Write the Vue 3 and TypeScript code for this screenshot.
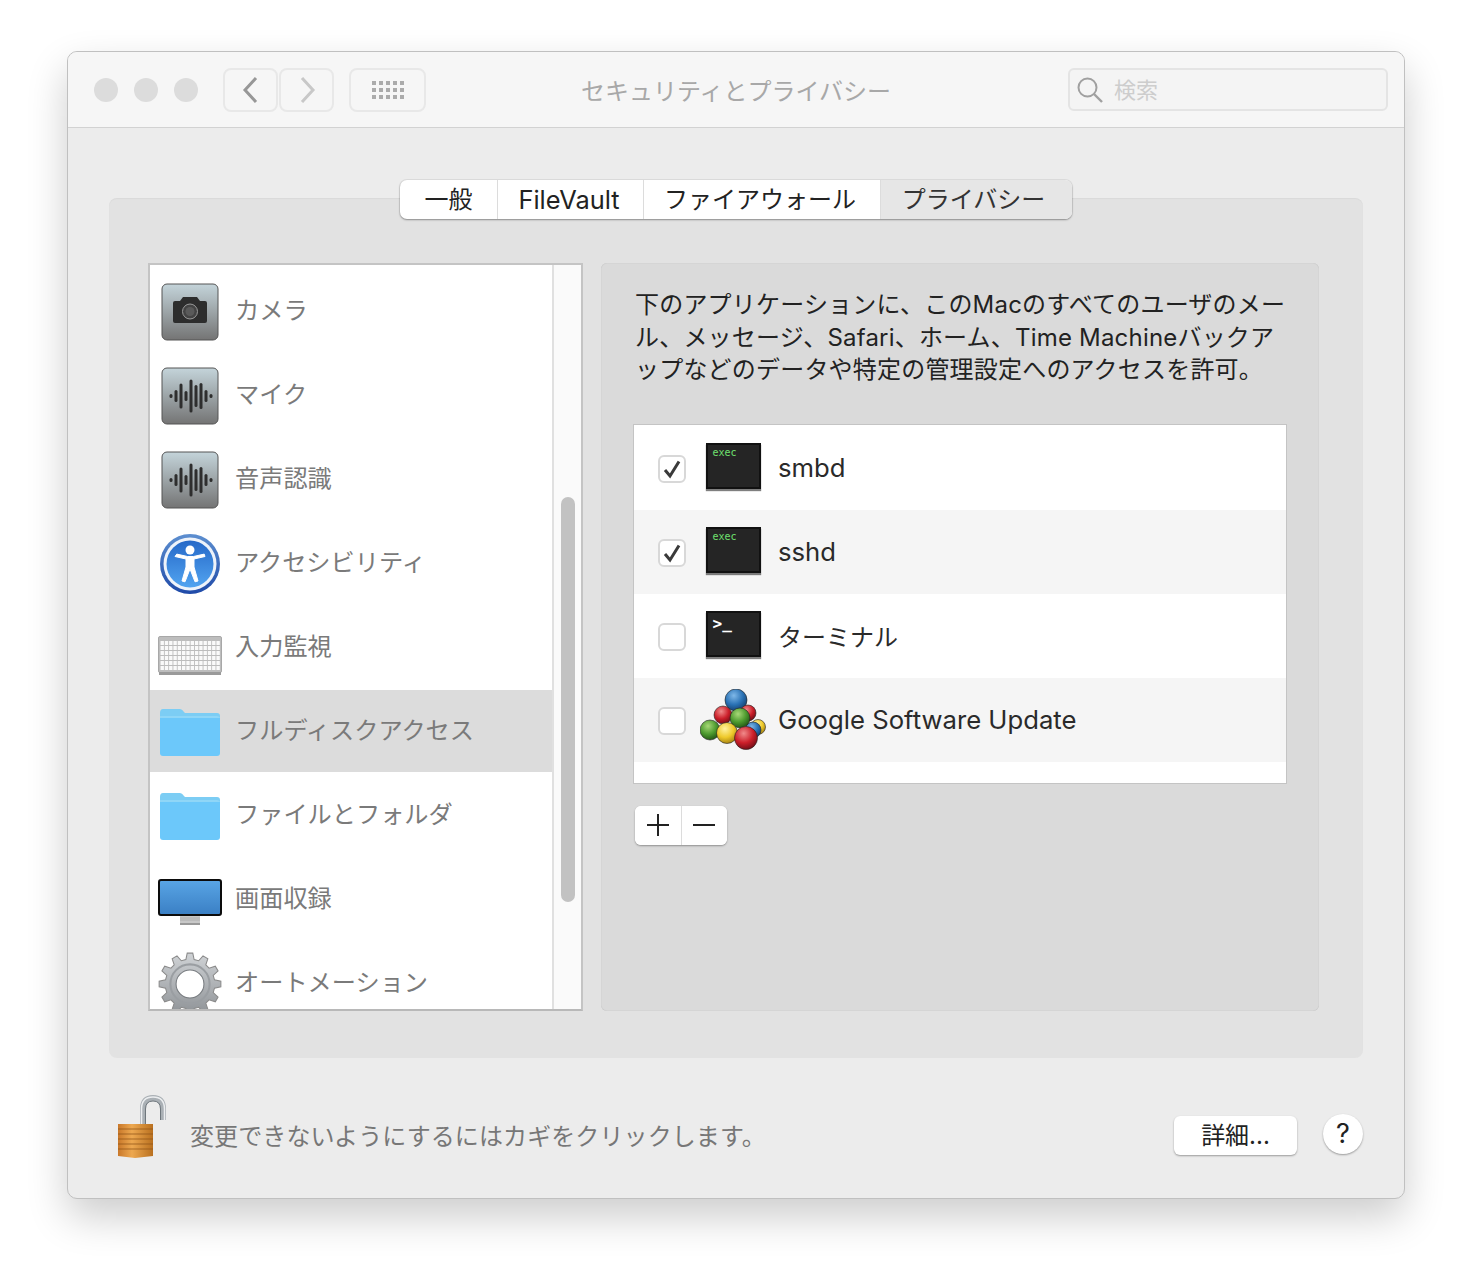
<template>
  <div class="page">
    <div class="window">
      <header class="titlebar">
        <div class="lights">
          <span></span>
          <span></span>
          <span></span>
        </div>
        <div class="nav">
          <button class="tool">
            <svg width="20" height="28" viewBox="0 0 20 28"><path d="M15 2 4 14l11 12" fill="none" stroke="#979797" stroke-width="3" /></svg>
          </button>
          <button class="tool">
            <svg width="20" height="28" viewBox="0 0 20 28"><path d="m5 2 11 12L5 26" fill="none" stroke="#c8c8c8" stroke-width="3" /></svg>
          </button>
        </div>
        <button class="tool grid-btn">
          <span v-for="n in 15" :key="n"></span>
        </button>
        <div class="title">セキュリティとプライバシー</div>
        <div class="search">
          <svg width="28" height="28" viewBox="0 0 28 28">
            <circle cx="11.5" cy="11.5" r="9" fill="none" stroke="#a0a0a0" stroke-width="2" />
            <path d="m18 18 8 8" stroke="#a0a0a0" stroke-width="2.4" />
          </svg>
          <span>検索</span>
        </div>
      </header>

      <main class="content">
        <nav class="tabs">
          <div v-for="t in tabs" :key="t" class="tab" :class="{ active: t === 'プライバシー' }">{{ t }}</div>
        </nav>
        <section class="panel">
          <div class="list">
            <div class="rows">
              <div v-for="s in services" :key="s.label" class="row" :class="{ selected: s.selected }">
                <div class="row-icon">
                  <svg v-if="s.icon === 'camera'" width="58" height="58" viewBox="0 0 58 58">
                    <defs>
                      <linearGradient id="tile1" x1="0" y1="0" x2="0" y2="1">
                        <stop offset="0" stop-color="#c4d4da" />
                        <stop offset="1" stop-color="#747474" />
                      </linearGradient>
                    </defs>
                    <rect x="1" y="1" width="56" height="56" rx="5" fill="url(#tile1)" stroke="#555" />
                    <path d="M14 18h5l3-4h14l3 4h5q2 0 2 2v18q0 2-2 2H14q-2 0-2-2V20q0-2 2-2z" fill="#2d2d2d" />
                    <circle cx="29" cy="28.500" r="7.500" fill="#444" stroke="#9a9a9a" />
                    <circle cx="29" cy="28.500" r="4.500" fill="#5a5a5a" />
                  </svg>
                  <svg v-else-if="s.icon === 'wave'" width="58" height="58" viewBox="0 0 58 58">
                    <defs>
                      <linearGradient id="tile2" x1="0" y1="0" x2="0" y2="1">
                        <stop offset="0" stop-color="#c4d4da" />
                        <stop offset="1" stop-color="#747474" />
                      </linearGradient>
                    </defs>
                    <rect x="1" y="1" width="56" height="56" rx="5" fill="url(#tile2)" stroke="#555" />
                    <rect v-for="b in waveBars" :key="b.x" :x="b.x" :y="29 - b.h / 2" width="3" :height="b.h" rx="1.500" fill="#2e2e2e" />
                  </svg>
                  <svg v-else-if="s.icon === 'access'" width="62" height="62" viewBox="0 0 62 62">
                    <defs>
                      <linearGradient id="accessFill" x1="0" y1="0" x2="0" y2="1">
                        <stop offset="0" stop-color="#2568c8" />
                        <stop offset="1" stop-color="#52a4f0" />
                      </linearGradient>
                      <linearGradient id="accessRim" x1="0" y1="0" x2="0" y2="1">
                        <stop offset="0" stop-color="#5d8fd0" />
                        <stop offset="1" stop-color="#1f4aa8" />
                      </linearGradient>
                    </defs>
                    <circle cx="31" cy="31" r="30" fill="url(#accessRim)" />
                    <circle cx="31" cy="31" r="26.500" fill="#eef3fa" />
                    <circle cx="31" cy="31" r="23.500" fill="url(#accessFill)" />
                    <circle cx="31" cy="17" r="4.500" fill="#fff" />
                    <path d="M16 23.500 27 26v8l-4 14 3 .8 5-12.800 5 12.800 3-.8-4-14v-8l11-2.500-.8-2.400-10.700 2.400h-6l-10.700-2.400z" fill="#fff" stroke="#fff" />
                  </svg>
                  <svg v-else-if="s.icon === 'keyboard'" class="keyboard" width="64" height="40" viewBox="0 0 64 40">
                    <rect x="0.500" y="0.500" width="63" height="36" rx="1.500" fill="#bdbdbd" stroke="#a8a8a8" />
                    <rect x="1" y="36" width="62" height="3" fill="#9a9a9a" />
                    <g fill="#fafafa">
                      <rect v-for="k in keys" :key="k.id" :x="k.x" :y="k.y" :width="k.w" height="4" />
                    </g>
                  </svg>
                  <svg v-else-if="s.icon === 'folder'" width="62" height="50" viewBox="0 0 62 50">
                    <path d="M1 6q0-4 3-4h17q2 0 4 3l1 1h32q3 0 3 3v6H1z" fill="#7ccdf4" />
                    <path d="M1 9h57q3 0 3 3v34q0 3-3 3H4q-3 0-3-3z" fill="#6cc8fa" />
                    <path d="M1 9h57q3 0 3 2H1z" fill="#8fd6f7" />
                  </svg>
                  <svg v-else-if="s.icon === 'display'" class="display" width="64" height="48" viewBox="0 0 64 48">
                    <defs>
                      <linearGradient id="screen" x1="0" y1="0" x2="0" y2="1">
                        <stop offset="0" stop-color="#59a5e5" />
                        <stop offset="1" stop-color="#3a7fc4" />
                      </linearGradient>
                    </defs>
                    <rect x="1" y="1" width="62" height="35" rx="2" fill="url(#screen)" stroke="#0c0c0c" stroke-width="2" />
                    <rect x="22" y="37" width="20" height="7" fill="#c8c8c8" />
                    <path d="M22 39h20M22 41h20" stroke="#a8a8a8" stroke-width="0.800" />
                    <rect x="22" y="44" width="20" height="2" fill="#999" />
                  </svg>
                  <svg v-else width="64" height="64" viewBox="0 0 62 62">
                    <defs>
                      <linearGradient id="gearFill" x1="0" y1="0" x2="0" y2="1">
                        <stop offset="0" stop-color="#d0d3d6" />
                        <stop offset="1" stop-color="#8e9296" />
                      </linearGradient>
                    </defs>
                    <path :d="gearPath" fill="url(#gearFill)" stroke="#8a8a8a" />
                    <circle cx="31" cy="31" r="19" fill="none" stroke="#9a9ea2" stroke-width="2" />
                    <circle cx="31" cy="31" r="13.500" fill="#fff" stroke="#777b7f" stroke-width="1" />
                  </svg>
                </div>
                <span class="row-label">{{ s.label }}</span>
              </div>
            </div>
            <div class="track"><div class="thumb"></div></div>
          </div>

          <div class="detail">
            <p class="desc">下のアプリケーションに、このMacのすべてのユーザのメール、メッセージ、Safari、ホーム、Time Machineバックアップなどのデータや特定の管理設定へのアクセスを許可。</p>
            <div class="apps">
              <div v-for="a in apps" :key="a.name" class="app">
                <span class="check">
                  <svg v-if="a.checked" width="20" height="20" viewBox="0 0 20 20"><path d="m3 11 5 6L17 2.500" fill="none" stroke="#3a3a3a" stroke-width="3" /></svg>
                </span>
                <div class="app-icon">
                  <div v-if="a.icon !== 'balls'" class="term">
                    <span v-if="a.icon === 'exec'" class="term-exec">exec</span>
                    <span v-else class="term-prompt">&gt;_</span>
                  </div>
                  <svg v-else class="balls" width="66" height="62" viewBox="0 0 66 62">
                    <defs>
                      <radialGradient v-for="c in ballColors" :id="c.id" :key="c.id" cx="0.4" cy="0.3" r="0.75">
                        <stop offset="0" :stop-color="c.light" />
                        <stop offset="0.55" :stop-color="c.mid" />
                        <stop offset="1" :stop-color="c.dark" />
                      </radialGradient>
                    </defs>
                    <circle v-for="(b, i) in balls" :key="i" :cx="b.x" :cy="b.y" :r="b.r" :fill="`url(#${b.c})`" stroke="#222" stroke-width="0.600" />
                  </svg>
                </div>
                <span class="app-name" :class="{ jp: a.icon === 'prompt' }">{{ a.name }}</span>
              </div>
            </div>
            <div class="plus-minus">
              <button>
                <svg width="24" height="24" viewBox="0 0 24 24"><path d="M12 1v22M1 12h22" stroke="#222" stroke-width="2" /></svg>
              </button>
              <button>
                <svg width="24" height="24" viewBox="0 0 24 24"><path d="M1 12h22" stroke="#222" stroke-width="2" /></svg>
              </button>
            </div>
          </div>
        </section>

        <footer class="bottom">
          <svg class="lock" width="50" height="64" viewBox="0 0 50 64">
            <defs>
              <linearGradient id="lockBody" x1="0" y1="0" x2="1" y2="0">
                <stop offset="0" stop-color="#c9782a" />
                <stop offset="0.4" stop-color="#eda850" />
                <stop offset="1" stop-color="#b9701f" />
              </linearGradient>
            </defs>
            <path d="M27 30V14q0-11 10-11t10 11v11" fill="none" stroke="#aab0b5" stroke-width="6" />
            <path d="M25.500 30V14Q25.500 2 37 2t11.500 12v11" fill="none" stroke="#eceef0" stroke-width="1.500" />
            <path d="M29.500 30V14q0-8 7.500-8t7.500 8v11" fill="none" stroke="#6f777d" stroke-width="1" />
            <path d="M2 29h35v32l-18 2-17-2z" fill="url(#lockBody)" />
            <path d="M2 34h35M2 39h35M2 44h35M2 49h35M2 54h35" stroke="#8f5418" stroke-width="1.200" opacity="0.75" />
          </svg>
          <span class="lock-text">変更できないようにするにはカギをクリックします。</span>
          <button class="more">詳細...</button>
          <button class="help">?</button>
        </footer>
      </main>
    </div>
  </div>
</template>

<script setup lang="ts">
interface Service {
  label: string
  icon: string
  selected?: boolean
}

const tabs = ['一般', 'FileVault', 'ファイアウォール', 'プライバシー']

const services: Service[] = [
  { label: 'カメラ', icon: 'camera' },
  { label: 'マイク', icon: 'wave' },
  { label: '音声認識', icon: 'wave' },
  { label: 'アクセシビリティ', icon: 'access' },
  { label: '入力監視', icon: 'keyboard' },
  { label: 'フルディスクアクセス', icon: 'folder', selected: true },
  { label: 'ファイルとフォルダ', icon: 'folder' },
  { label: '画面収録', icon: 'display' },
  { label: 'オートメーション', icon: 'gear' }
]

const apps = [
  { name: 'smbd', icon: 'exec', checked: true },
  { name: 'sshd', icon: 'exec', checked: true },
  { name: 'ターミナル', icon: 'prompt', checked: false },
  { name: 'Google Software Update', icon: 'balls', checked: false }
]

const waveBars = [4, 12, 25, 10, 33, 22, 26, 12, 4].map((h, i) => ({ x: 8.5 + i * 5, h }))

const keys: { id: string; x: number; y: number; w: number }[] = []
for (let r = 0; r < 6; r++) {
  for (let c = 0; c < 14; c++) {
    keys.push({ id: `${r}-${c}`, x: 2.5 + c * 4.3, y: 5 + r * 5, w: 3.4 })
  }
}

function buildGear(teeth: number, outer: number, inner: number): string {
  const pts: string[] = []
  const step = (Math.PI * 2) / teeth
  for (let i = 0; i < teeth; i++) {
    const a = i * step - Math.PI / 2
    const corners: [number, number][] = [
      [inner, a - step * 0.32],
      [outer, a - step * 0.17],
      [outer, a + step * 0.17],
      [inner, a + step * 0.32]
    ]
    for (const [r, t] of corners) {
      pts.push(`${(31 + r * Math.cos(t)).toFixed(1)} ${(31 + r * Math.sin(t)).toFixed(1)}`)
    }
  }
  return `M${pts.join('L')}Z`
}

const gearPath = buildGear(12, 30, 24)

const ballColors = [
  { id: 'bBlue', light: '#7fb8e8', mid: '#2a72b5', dark: '#123a66' },
  { id: 'bRed', light: '#f08a8a', mid: '#cc1f2a', dark: '#6a0c14' },
  { id: 'bGreen', light: '#a8d878', mid: '#4c9a2e', dark: '#1f4f12' },
  { id: 'bYellow', light: '#fff2a0', mid: '#eec92a', dark: '#a07c10' }
]

const balls = [
  { x: 36, y: 11, r: 11, c: 'bBlue' },
  { x: 58, y: 38, r: 7.5, c: 'bYellow' },
  { x: 53, y: 41, r: 8, c: 'bBlue' },
  { x: 23, y: 26, r: 9, c: 'bRed' },
  { x: 48, y: 24, r: 8, c: 'bRed' },
  { x: 10, y: 41, r: 10, c: 'bGreen' },
  { x: 40, y: 29, r: 10, c: 'bGreen' },
  { x: 27, y: 44, r: 10.5, c: 'bYellow' },
  { x: 46, y: 49, r: 11.5, c: 'bRed' }
]
</script>

<style>
body {
  background: #fff;
}
</style>

<style scoped>
.page {
  padding: 51px 67px 0;
  height: 1282px;
  box-sizing: border-box;
  font-family: Inter, "Noto Sans CJK JP", sans-serif;
}

.window {
  width: 1338px;
  height: 1148px;
  display: flex;
  flex-direction: column;
  box-sizing: border-box;
  border: 1px solid #c0c0c0;
  border-radius: 10px;
  overflow: hidden;
  background: #ececec;
  box-shadow: 0 18px 40px rgba(0, 0, 0, 0.2);
}

.titlebar {
  height: 76px;
  flex: none;
  display: flex;
  align-items: center;
  position: relative;
  box-sizing: border-box;
  padding-left: 26px;
  background: #f6f6f6;
  border-bottom: 1px solid #d2d2d2;
}

.lights {
  display: flex;
  gap: 16px;
  margin-right: 25px;
}

.lights span {
  width: 24px;
  height: 24px;
  border-radius: 50%;
  background: #dcdcdc;
}

.nav {
  display: flex;
  gap: 1px;
  margin-right: 15px;
}

.tool {
  width: 55px;
  height: 44px;
  padding: 0;
  display: flex;
  align-items: center;
  justify-content: center;
  background: #f6f6f6;
  border: 2px solid #e8e8e8;
  border-radius: 8px;
}

.grid-btn {
  width: 77px;
  display: grid;
  grid-template-columns: repeat(5, 4px);
  gap: 3px;
  justify-content: center;
  align-content: center;
}

.grid-btn span {
  width: 4px;
  height: 4px;
  background: #ababab;
}

.title {
  position: absolute;
  left: 0;
  right: 0;
  text-align: center;
  font-size: 24px;
  color: #a8a8a8;
  pointer-events: none;
}

.search {
  margin-left: auto;
  margin-right: 16px;
  width: 320px;
  height: 43px;
  display: flex;
  align-items: center;
  gap: 10px;
  box-sizing: border-box;
  padding-left: 6px;
  background: #f4f4f4;
  border: 2px solid #e4e4e4;
  border-radius: 6px;
  font-size: 22px;
  color: #cdcdcd;
}

.search span {
  margin-bottom: 4px;
}

.content {
  flex: 1;
  display: flex;
  flex-direction: column;
  padding: 52px 41px 0;
}

.tabs {
  align-self: center;
  position: relative;
  z-index: 1;
  display: flex;
  height: 39px;
  margin-bottom: -21px;
  box-sizing: border-box;
  background: #fff;
  border-radius: 7px;
  box-shadow: 0 1px 2px rgba(0, 0, 0, 0.35), 0 0 0 1px rgba(0, 0, 0, 0.06);
  overflow: hidden;
}

.tab {
  display: flex;
  align-items: center;
  justify-content: center;
  box-sizing: border-box;
  padding-bottom: 4px;
  font-size: 24px;
  color: #222;
  border-left: 1px solid #dcdcdc;
}

.tab:nth-child(1) {
  width: 97px;
  border-left: none;
}

.tab:nth-child(2) {
  width: 146px;
  padding: 0 3px 0 0;
  font-size: 25.4px;
}

.tab:nth-child(3) {
  width: 237px;
  padding-right: 4px;
}

.tab:nth-child(4) {
  width: 192px;
  padding-right: 6px;
}

.tab.active {
  background: #e6e6e6;
  color: #333;
}

.panel {
  height: 860px;
  flex: none;
  display: flex;
  gap: 18px;
  box-sizing: border-box;
  padding: 65px 44px 47px 39px;
  background: #e2e2e2;
  border-radius: 8px;
  box-shadow: inset 0 1px 1px rgba(0, 0, 0, 0.04);
}

.list {
  width: 435px;
  flex: none;
  display: flex;
  box-sizing: border-box;
  background: #fff;
  border: 2px solid #c4c4c4;
  border-bottom-color: #b8b8b8;
  overflow: hidden;
}

.rows {
  flex: 1;
  padding-top: 5px;
  overflow: hidden;
}

.row {
  height: 84px;
  display: flex;
  align-items: center;
}

.row.selected {
  background: linear-gradient(#dcdcdc, #dcdcdc) no-repeat top / 100% 82px;
}

.row-icon {
  width: 79px;
  flex: none;
  display: flex;
  align-items: center;
  justify-content: center;
}

.keyboard {
  margin-top: 16px;
}

.display {
  margin-top: 6px;
}

.row-label {
  margin: 0 0 8px 6px;
  font-size: 24.2px;
  color: #7a7a7a;
  white-space: nowrap;
}

.track {
  width: 29px;
  flex: none;
  box-sizing: border-box;
  padding: 232px 6px 0 7px;
  background: #fafafa;
  border-left: 2px solid #e0e0e0;
}

.thumb {
  height: 405px;
  border-radius: 7px;
  background: #c2c2c2;
}

.detail {
  flex: 1;
  min-width: 0;
  box-sizing: border-box;
  padding: 26px 32px 0;
  background: #dadada;
  border-radius: 6px;
  box-shadow: inset 0 0 1px rgba(0, 0, 0, 0.2);
}

.desc {
  width: 652px;
  margin: 0 0 37px 2px;
  font-size: 24px;
  line-height: 32.5px;
  letter-spacing: 0.2px;
  color: #222;
}

.apps {
  height: 360px;
  box-sizing: border-box;
  padding-top: 1px;
  background: #fff;
  border: 1px solid #c4c4c4;
}

.app {
  height: 84px;
  display: flex;
  align-items: center;
  padding-left: 24px;
}

.app:nth-child(even) {
  background: #f5f5f5;
}

.check {
  width: 28px;
  height: 28px;
  margin-top: 3px;
  box-sizing: border-box;
  display: flex;
  align-items: center;
  justify-content: center;
  background: #fff;
  border: 2px solid #d8d8d8;
  border-radius: 6px;
}

.app-icon {
  width: 64px;
  height: 62px;
  margin-left: 15px;
  display: flex;
  align-items: center;
  justify-content: center;
}

.balls {
  flex: none;
}

.term {
  width: 55px;
  height: 46px;
  margin-bottom: 4px;
  box-sizing: border-box;
  padding: 3px 5px;
  background: #252525;
  border: 2px solid #111;
  box-shadow: 0 2px 1px rgba(0, 0, 0, 0.5);
  line-height: 1;
}

.term-exec {
  display: block;
  font-size: 10px;
  font-family: "DejaVu Sans Mono", monospace;
  color: #6fe06f;
}

.term-prompt {
  display: block;
  font-size: 16px;
  font-weight: 700;
  font-family: "DejaVu Sans Mono", monospace;
  color: #fff;
}

.app-name {
  margin-left: 13px;
  font-size: 25.7px;
  color: #2a2a2a;
}

.app-name.jp {
  font-size: 24px;
}

.plus-minus {
  width: 92px;
  height: 39px;
  margin: 22px 0 0 2px;
  display: flex;
  border-radius: 6px;
  background: #fff;
  box-shadow: 0 1px 2px rgba(0, 0, 0, 0.35);
  overflow: hidden;
}

.plus-minus button {
  flex: 1;
  padding: 0;
  display: flex;
  align-items: center;
  justify-content: center;
  background: #fff;
  border: none;
}

.plus-minus button + button {
  border-left: 1px solid #dcdcdc;
}

.bottom {
  flex: 1;
  display: flex;
  align-items: center;
  padding-left: 7px;
}

.lock {
  flex: none;
  margin-top: -3px;
}

.lock-text {
  margin-left: 24px;
  margin-top: 12px;
  font-size: 24px;
  letter-spacing: 0.1px;
  color: #777;
}

.more {
  width: 123px;
  height: 39px;
  margin-left: auto;
  margin-top: 15px;
  padding: 0 0 4px;
  font: inherit;
  font-size: 24px;
  color: #222;
  background: #fff;
  border: none;
  border-radius: 6px;
  box-shadow: 0 1px 2px rgba(0, 0, 0, 0.35);
}

.help {
  width: 40px;
  height: 40px;
  margin-left: 26px;
  margin-top: 11px;
  padding: 0;
  font: inherit;
  font-size: 27px;
  color: #222;
  background: #fff;
  border: none;
  border-radius: 50%;
  box-shadow: 0 1px 2px rgba(0, 0, 0, 0.35);
}
</style>
